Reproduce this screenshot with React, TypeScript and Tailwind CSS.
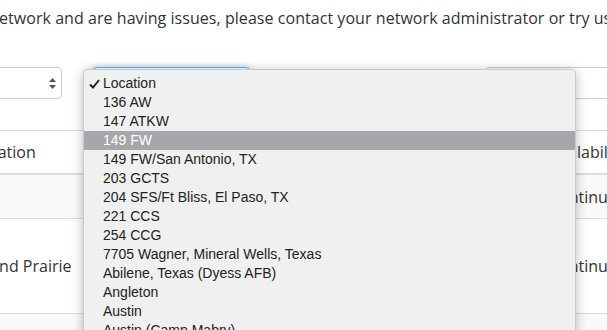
const locations = [
  "Location",
  "136 AW",
  "147 ATKW",
  "149 FW",
  "149 FW/San Antonio, TX",
  "203 GCTS",
  "204 SFS/Ft Bliss, El Paso, TX",
  "221 CCS",
  "254 CCG",
  "7705 Wagner, Mineral Wells, Texas",
  "Abilene, Texas (Dyess AFB)",
  "Angleton",
  "Austin",
  "Austin (Camp Mabry)",
];

const App = () => {
  return (
    <div className="relative w-[607px] h-[330px] overflow-hidden bg-white text-[#333] font-['Open_Sans',sans-serif]">
      <p className="whitespace-nowrap text-[16px] leading-6 pt-[6px] -ml-[1px] tracking-[0.05px]">
        etwork and are having issues, please contact your network administrator or try using a different browser.
      </p>

      {/* filters */}
      <div className="flex items-start mt-[37px] h-[32px]">
        <div className="relative shrink-0 -ml-[20px] w-[82px] h-[32px] rounded-[4px] border border-[#ccc] bg-white">
          <svg className="absolute right-[5px] top-[10px]" width="7" height="11" viewBox="0 0 7 11">
            <path d="M3.5 0 L7 4 L0 4 Z" fill="#555" />
            <path d="M3.5 11 L7 7 L0 7 Z" fill="#555" />
          </svg>
        </div>
        <div className="shrink-0 ml-[31px] w-[157px] h-[32px] rounded-[4px] border border-[#66afe9] shadow-[0_0_6px_rgba(102,175,233,0.6)] bg-white" />
        <div className="shrink-0 ml-[235px] w-[140px] h-[32px] rounded-[4px] border border-[#ccc] bg-white" />
      </div>

      {/* table */}
      <div className="mt-[31px] -ml-[28px] w-[660px] text-[16px]">
        <div className="flex items-center h-[45px] border-t border-[#ddd] border-b-2">
          <div className="w-[574px] shrink-0">Location</div>
          <div>Availability</div>
        </div>
        <div className="flex items-center h-[44px] bg-[#f9f9f9] border-b border-[#ddd]">
          <div className="w-[574px] shrink-0" />
          <div className="ml-[3px]">Continuous</div>
        </div>
        <div className="flex items-center h-[95px] border-b border-[#ddd]">
          <div className="w-[574px] shrink-0">Grand Prairie</div>
          <div className="ml-[3px]">Continuous</div>
        </div>
        <div className="h-[40px] bg-[#f9f9f9]" />
      </div>

      {/* native select popup */}
      <div className="absolute left-[83px] top-[69px] w-[493px] h-[280px] rounded-t-[5px] bg-[#f0f0f0] border border-[#c9c9c9] shadow-[0_2px_12px_rgba(0,0,0,0.28)] pt-[4px] font-['Liberation_Sans',Arial,sans-serif] text-[14px] text-[#222]">
        {locations.map((loc, i) => (
          <div
            key={loc}
            className={
              "relative h-[19px] leading-[19px] pl-[19px] whitespace-nowrap " +
              (i === 3 ? "bg-[#a6a6ab] text-white" : "")
            }
          >
            {i === 0 && (
              <svg className="absolute left-[5px] top-[5px]" width="11" height="10" viewBox="0 0 11 10">
                <path d="M1 5.5 L4 8.5 L10 1" stroke="#222" strokeWidth="2" fill="none" />
              </svg>
            )}
            {loc}
          </div>
        ))}
      </div>
    </div>
  );
};

export default App;
